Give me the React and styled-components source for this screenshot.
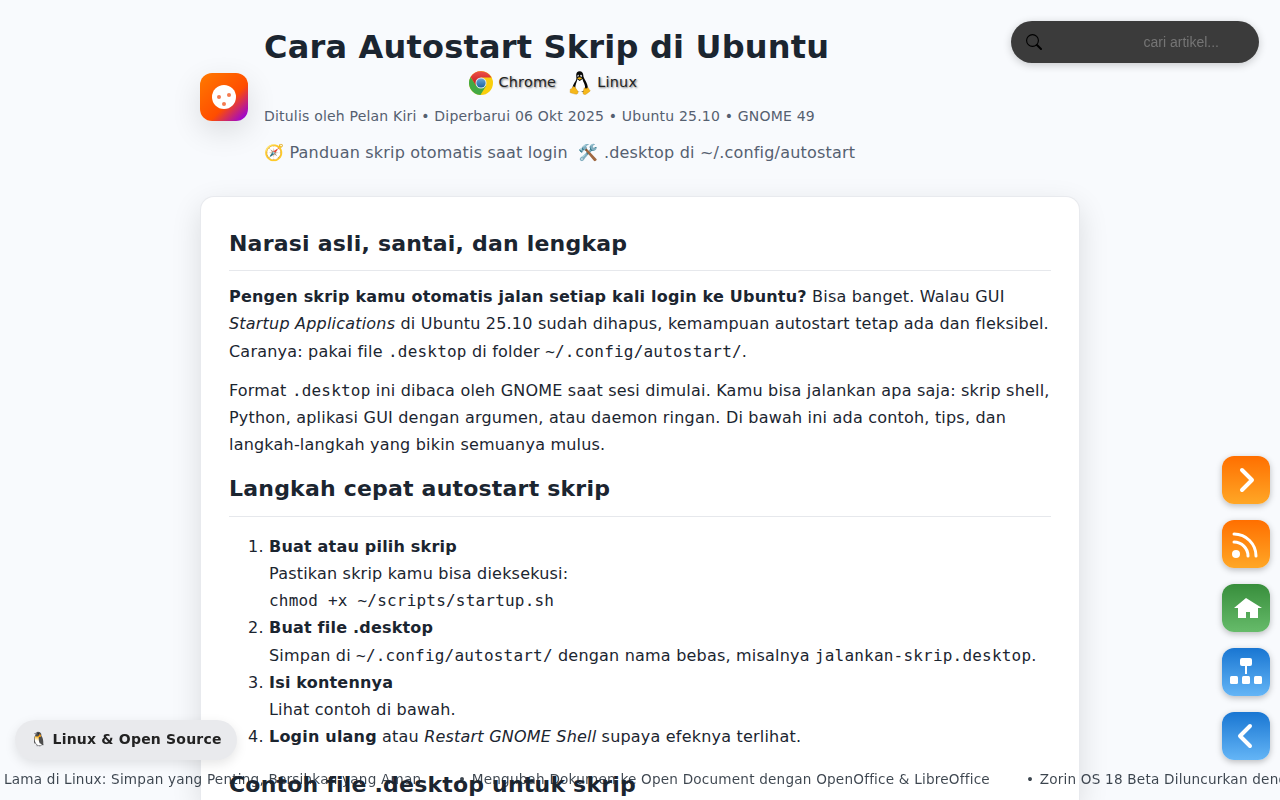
import React from 'react';
import styled, { createGlobalStyle } from 'styled-components';

const Global = createGlobalStyle`
  * { box-sizing: border-box; }
  html, body { margin: 0; height: 100%; overflow: hidden; }
  body {
    background: #f8fafd;
    color: #1b2530;
    font: 16px/27.2px "DejaVu Sans", sans-serif;
    letter-spacing: 0.2px;
  }
  code { font: 16px "DejaVu Sans Mono", monospace; }
`;

const Page = styled.div`
  width: 880px;
  height: 800px;
  margin: 0 auto;
`;
const Header = styled.header`
  display: flex;
  align-items: center;
  gap: 16px;
  height: 168px;
  padding-top: 25px;
`;
const Logo = styled.div`
  width: 48px;
  height: 48px;
  border-radius: 12px;
  background: linear-gradient(135deg, #ff7a00 0%, #ff4d00 60%, #9500e0 95%);
  box-shadow: 0 10px 30px rgba(0, 0, 0, 0.12);
  svg { display: block; }
`;
const Heading = styled.div`
  height: 138px;
`;
const Title = styled.h1`
  margin: 0;
  font-size: 32px;
  line-height: 38px;
`;
const Badges = styled.div`
  display: flex;
  justify-content: center;
  height: 24px;
  margin-top: 5px;
  padding-right: 1.2px;
`;
const Badge = styled.span`
  display: flex;
  align-items: center;
  gap: 5.4px;
  margin-right: 11.8px;
  color: #222;
  font-size: 14.4px;
  font-weight: 500;
  line-height: 22px;
  text-shadow: 1px 1px 2px rgba(0, 0, 0, 0.5);
  span { height: 24px; }
`;
const Meta = styled.div`
  margin-top: 10px;
  color: #556070;
  font-size: 14px;
  line-height: 22px;
`;
const Subtitle = styled.div`
  margin-top: 12px;
  color: #556070;
  white-space: pre;
`;
const Card = styled.main`
  height: 604px;
  margin-top: 28.1px;
  padding: 28px 28px 0;
  border: 1px solid #e8eaee;
  border-bottom: 0;
  border-radius: 14px 14px 0 0;
  background: #fff;
  box-shadow: 0 10px 30px rgba(0, 0, 0, 0.12);
`;
const Section = styled.h2`
  height: 46.2px;
  margin: 0 0 12px;
  border-bottom: ${(p) => (p.$plain ? '0' : '1px solid #e6e8ec')};
  font-size: 22px;
  line-height: ${(p) => (p.$first ? '37px' : '36.6px')};
`;
const Paragraph = styled.p`
  margin: 0 0 12px;
  white-space: nowrap;
`;
const Steps = styled.ol`
  margin: 16px 0 16.7px;
  padding-left: 40px;
  white-space: nowrap;
`;

const SearchBox = styled.label`
  position: fixed;
  top: 21px;
  right: 21px;
  display: flex;
  align-items: center;
  width: 248px;
  height: 42px;
  padding: 0 40px 0 15px;
  border-radius: 21px;
  background: #3b3b3b;
  box-shadow: 0 2px 8px rgba(0, 0, 0, 0.2);
  input {
    width: 100px;
    margin-left: auto;
    padding: 0;
    border: 0;
    outline: 0;
    background: transparent;
    color: #ddd;
    font: 14px "Liberation Sans", sans-serif;
    text-align: right;
  }
  input::placeholder { color: #757575; }
`;
const SideNav = styled.nav`
  position: fixed;
  right: 10px;
  bottom: 40px;
  display: flex;
  flex-direction: column;
  gap: 16px;
`;
const tones = {
  orange: '#ff6f00, #ffa726',
  green: '#388e3c, #66bb6a',
  blue: '#1976d2, #64b5f6',
};
const NavButton = styled.a`
  width: 48px;
  height: 48px;
  border-radius: 12px;
  background: linear-gradient(${(p) => tones[p.$tone]});
  box-shadow: 0 2px 6px rgba(0, 0, 0, 0.25);
  svg { display: block; }
`;
const Topic = styled.div`
  position: fixed;
  left: 15px;
  bottom: 40px;
  width: 222px;
  height: 40px;
  padding: 0 15.3px;
  border-radius: 20px;
  background: #e9eaed;
  box-shadow: 0 4px 12px rgba(0, 0, 0, 0.1);
  color: #222;
  font-size: 14px;
  font-weight: 700;
  line-height: 38px;
  white-space: pre;
`;
const Ticker = styled.div`
  position: fixed;
  left: 4px;
  bottom: 9px;
  display: flex;
  color: #1b2530;
  font-size: 13.6px;
  line-height: 24px;
  opacity: 0.85;
  white-space: nowrap;
`;
const TickerItem = styled.span`
  width: ${(p) => p.$width}px;
  flex: none;
`;
const Bullet = styled.span`
  margin-right: 1px;
`;

const Chrome = () => (
  <svg width="24" height="24" viewBox="0 0 24 24">
    <defs>
      <linearGradient id="cr" x2="0" y2="1"><stop stopColor="#ee5148" /><stop offset="1" stopColor="#c2171c" /></linearGradient>
      <linearGradient id="cb" x2="0" y2="1"><stop stopColor="#68a9d8" /><stop offset="1" stopColor="#1d629f" /></linearGradient>
    </defs>
    <circle cx="12" cy="12" r="12" fill="#f9cf0c" />
    <path d="M1.6 6A12 12 0 0 0 11.4 24L17 15 12 12 7.2 14.8Z" fill="#43a944" />
    <path d="M1.6 6A12 12 0 0 1 22.5 6.5H12L7 14.5Z" fill="url(#cr)" />
    <circle cx="12" cy="12" r="5.5" fill="#e6ebee" />
    <circle cx="12" cy="12" r="4.6" fill="url(#cb)" />
  </svg>
);

const Tux = () => (
  <svg width="24" height="24" viewBox="0 0 24 24">
    <path d="M8.2 4C8.2 1.5 9.5.2 11.6.2c2.4 0 3.7 1.7 3.7 4.1 0 3.8 4.8 7.4 4.6 13.2L17 21H7L4.5 17c.4-4.4 3.9-7 3.9-9.5Z" fill="#080808" />
    <path d="M9.3 8.2 11.7 10l2.8-1.9c.4 3 3 5.3 2.6 9.5-.5 2.5-2.2 3.3-5 3.3-3.2 0-4.7-1.5-4.8-4.2-.1-3.4 1.7-5.5 2-8.5Z" fill="#fff" />
    <ellipse cx="10.2" cy="5" rx=".8" ry="1.2" fill="#ddd" /><ellipse cx="13" cy="5" rx="1" ry="1.3" fill="#ddd" />
    <circle cx="10.4" cy="5.2" r=".5" /><circle cx="12.7" cy="5.2" r=".5" />
    <path d="M9 7.2 11.5 6.2l2.8 1-2.6 1.6Z" fill="#f3b515" />
    <path d="m5 15.5 1.9.6 3 4.2c.8 1.8-.8 3.4-2.8 2.8l-4.7-1.3c-.7-.4 0-2.1-.2-3.6 1.8-.2 1.8-1.3 2.8-2.7Zm11.2 1.2c1.4 1.2 2.6 1 3.8-.3.8.4.4 1.8 2 3 .5.6-.1 1.1-3.7 3.6-1.3 1-3.4.6-3.4-1.2Z" fill="#f6b81b" stroke="#c6860a" strokeWidth=".35" />
  </svg>
);

const Icon = ({ name }) => (
  <svg width="48" height="48" viewBox="0 0 48 48" fill="none" stroke="#fff" strokeWidth="4" strokeLinecap="round" strokeLinejoin="round">
    {name === 'next' && <path d="m20 14 10 10-10 10" />}
    {name === 'prev' && <path d="M28 14 18 24l10 10" />}
    {name === 'rss' && (
      <>
        <circle cx="14" cy="34" r="4" fill="#fff" stroke="none" />
        <path d="M12 22a14 14 0 0 1 14 14M12 14a22 22 0 0 1 22 22" strokeWidth="3" />
      </>
    )}
    {name === 'home' && <path d="M24 14 12 24h4v10h8v-6h4v6h8V24h4Z" fill="#fff" stroke="none" />}
    {name === 'map' && (
      <g fill="#fff" stroke="none">
        <rect x="18" y="10" width="12" height="8" rx="2" />
        <path d="M23 18h2v8h-2z" />
        <rect x="8" y="28" width="8" height="8" rx="1.5" />
        <rect x="20" y="28" width="8" height="8" rx="1.5" />
        <rect x="32" y="28" width="8" height="8" rx="1.5" />
      </g>
    )}
  </svg>
);

const links = [['next', 'orange'], ['rss', 'orange'], ['home', 'green'], ['map', 'blue'], ['prev', 'blue']];

export default function App() {
  return (
    <>
      <Global />
      <Page>
        <Header>
          <Logo>
            <svg width="48" height="48" viewBox="0 0 48 48">
              <circle cx="24" cy="24" r="12" fill="#fff" />
              <g fill="#f47b50"><circle cx="19" cy="24" r="2" /><circle cx="29" cy="22" r="2" /><circle cx="24" cy="31" r="2" /></g>
            </svg>
          </Logo>
          <Heading>
            <Title>Cara Autostart Skrip di Ubuntu</Title>
            <Badges>
              <Badge><Chrome /><span>Chrome</span></Badge>
              <Badge><Tux /><span>Linux</span></Badge>
            </Badges>
            <Meta>Ditulis oleh Pelan Kiri • Diperbarui 06 Okt 2025 • Ubuntu 25.10 • GNOME 49</Meta>
            <Subtitle>🧭 Panduan skrip otomatis saat login  🛠️ .desktop di ~/.config/autostart</Subtitle>
          </Heading>
        </Header>
        <Card>
          <Section $first>Narasi asli, santai, dan lengkap</Section>
          <Paragraph>
            <strong>Pengen skrip kamu otomatis jalan setiap kali login ke Ubuntu?</strong> Bisa banget. Walau GUI<br />
            <em>Startup Applications</em> di Ubuntu 25.10 sudah dihapus, kemampuan autostart tetap ada dan fleksibel.<br />
            Caranya: pakai file <code>.desktop</code> di folder <code>~/.config/autostart/</code>.
          </Paragraph>
          <Paragraph>
            Format <code>.desktop</code> ini dibaca oleh GNOME saat sesi dimulai. Kamu bisa jalankan apa saja: skrip shell,<br />
            Python, aplikasi GUI dengan argumen, atau daemon ringan. Di bawah ini ada contoh, tips, dan<br />
            langkah-langkah yang bikin semuanya mulus.
          </Paragraph>
          <Section>Langkah cepat autostart skrip</Section>
          <Steps>
            <li><strong>Buat atau pilih skrip</strong><br />Pastikan skrip kamu bisa dieksekusi:<br /><code>chmod +x ~/scripts/startup.sh</code></li>
            <li><strong>Buat file .desktop</strong><br />Simpan di <code>~/.config/autostart/</code> dengan nama bebas, misalnya <code>jalankan-skrip.desktop</code>.</li>
            <li><strong>Isi kontennya</strong><br />Lihat contoh di bawah.</li>
            <li><strong>Login ulang</strong> atau <em>Restart GNOME Shell</em> supaya efeknya terlihat.</li>
          </Steps>
          <Section $plain>Contoh file .desktop untuk skrip</Section>
        </Card>
      </Page>
      <SearchBox>
        <svg width="16" height="16" viewBox="0 0 16 16" fill="none" stroke="#000">
          <circle cx="6.5" cy="6.5" r="5.9" strokeWidth="1.1" />
          <path d="m11 11 4 4" strokeWidth="2" strokeLinecap="round" />
        </svg>
        <input placeholder="cari artikel..." />
      </SearchBox>
      <SideNav>
        {links.map(([name, tone]) => <NavButton key={name} $tone={tone}><Icon name={name} /></NavButton>)}
      </SideNav>
      <Topic>🐧 Linux &amp; Open Source</Topic>
      <Ticker>
        <TickerItem $width={454}>Lama di Linux: Simpan yang Penting, Bersihkan yang Aman</TickerItem>
        <TickerItem $width={568}><Bullet>•</Bullet> Mengubah Dokumen ke Open Document dengan OpenOffice &amp; LibreOffice</TickerItem>
        <TickerItem $width={600}><Bullet>•</Bullet> Zorin OS 18 Beta Diluncurkan dengan Tampilan Baru</TickerItem>
      </Ticker>
    </>
  );
}
